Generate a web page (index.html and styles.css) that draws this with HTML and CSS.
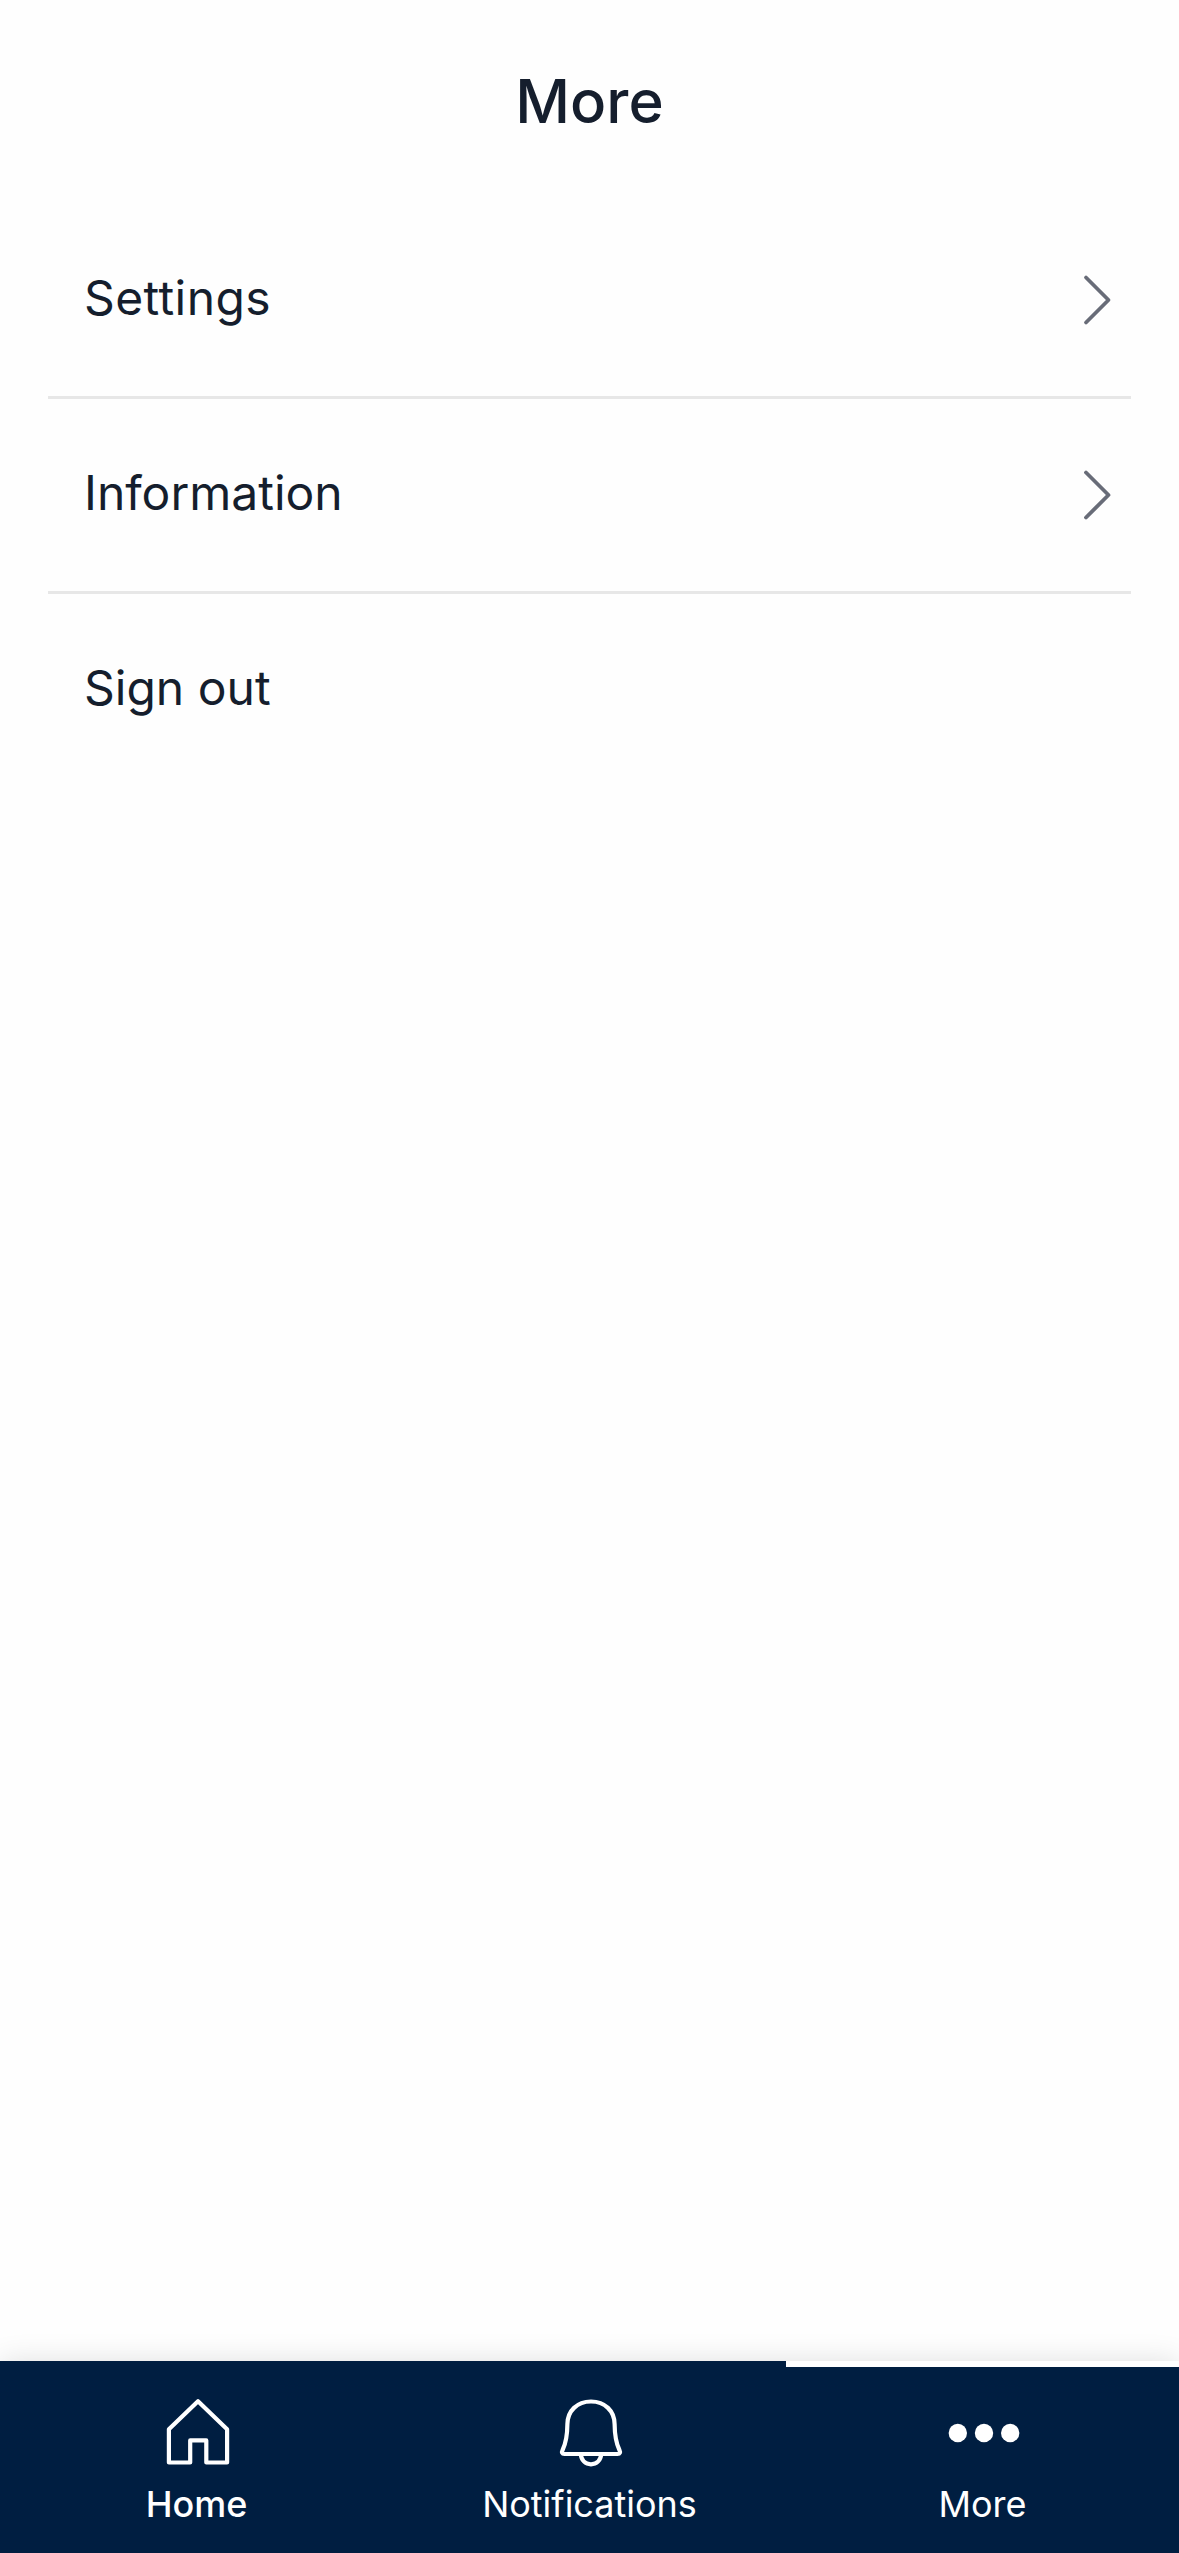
FILE: index.html
```
<!DOCTYPE html>
<html lang="en">
  <head>
    <meta charset="UTF-8" />
    <meta name="viewport" content="width=device-width, initial-scale=1.0" />
    <title>More</title>
    <link rel="stylesheet" href="styles.css">
  </head>
  <body>
    <div class="app">
      <header class="header">
        <h1 class="header__title">More</h1>
      </header>

      <main class="content">
        <ul class="menu">
          <li class="menu__item">
            <span class="menu__label menu__label--wide">Settings</span>
            <svg class="menu__chevron" viewBox="0 0 30 54">
              <path d="M3 4.5 25.5 27 3 49.5" />
            </svg>
          </li>
          <li class="menu__item">
            <span class="menu__label">Information</span>
            <svg class="menu__chevron" viewBox="0 0 30 54">
              <path d="M3 4.5 25.5 27 3 49.5" />
            </svg>
          </li>
          <li class="menu__item">
            <span class="menu__label">Sign out</span>
          </li>
        </ul>
      </main>

      <nav class="tabs">
        <a class="tabs__item tabs__item--strong">
          <svg class="tabs__icon" viewBox="0 0 72 72">
            <path d="M36 4.2 6.9 32.3V65.5H28.2V43.4H44.3V65.5H65.1V32.3Z" />
          </svg>
          <span class="tabs__label">Home</span>
        </a>
        <a class="tabs__item">
          <svg class="tabs__icon" viewBox="0 0 72 72">
            <path d="M36 4.5C22 4.5 12.6 14 12.4 27C12.3 39 11 46 7.6 53C6.4 55.5 7 57 9.5 57H62.5C65 57 65.6 55.5 64.4 53C61 46 59.7 39 59.6 27C59.4 14 50 4.5 36 4.5Z" />
            <path d="M25.8 57C26.3 63.5 30.5 67.3 36 67.3S45.7 63.5 46.2 57" />
          </svg>
          <span class="tabs__label">Notifications</span>
        </a>
        <a class="tabs__item tabs__item--active">
          <svg class="tabs__icon tabs__icon--dots" viewBox="0 0 72 72">
            <circle cx="9.8" cy="36" r="9.2" />
            <circle cx="36" cy="36" r="9.2" />
            <circle cx="62.2" cy="36" r="9.2" />
          </svg>
          <span class="tabs__label">More</span>
        </a>
      </nav>
    </div>
  </body>
</html>
```
FILE: styles.css
```
* {
  box-sizing: border-box;
}

body {
  margin: 0;
  background-color: #fefefe;
  font-family: Inter, "Liberation Sans", sans-serif;
  color: #151e2d;
}

ul {
  margin: 0;
  padding: 0;
  list-style: none;
}

.app {
  display: flex;
  flex-direction: column;
  height: 100vh;
  overflow: hidden;
}

.header {
  display: flex;
  justify-content: center;
  align-items: center;
  height: 204px;
  padding-bottom: 2px;
}

.header__title {
  margin: 0;
  font-size: 60px;
  font-weight: 500;
  line-height: 72px;
}

.content {
  flex: 1;
  padding: 0 48px;
}

.menu__item {
  display: flex;
  justify-content: space-between;
  align-items: center;
  height: 195px;
  padding: 0 18px 0 36px;
  border-bottom: 3px solid #e7e7e7;
}

.menu__item:last-child {
  border-bottom-color: transparent;
}

.menu__label {
  padding-bottom: 4px;
  font-size: 48px;
  line-height: 60px;
}

.menu__label--wide {
  letter-spacing: 0.4px;
}

.menu__chevron {
  width: 30px;
  height: 54px;
  fill: none;
  stroke: #686c78;
  stroke-width: 3.8;
  stroke-linecap: round;
  stroke-linejoin: round;
}

.tabs {
  display: flex;
  height: 192px;
  background-color: #001e41;
  box-shadow: 0 0 28px rgba(0, 0, 0, 0.12);
}

.tabs__item {
  flex: 1;
  display: flex;
  flex-direction: column;
  align-items: center;
  padding-top: 30px;
  border-top: 6px solid transparent;
  color: #fff;
}

.tabs__item--active {
  border-top-color: #fff;
}

.tabs__icon {
  width: 72px;
  height: 72px;
  margin-left: 3px;
  overflow: visible;
  fill: none;
  stroke: #fff;
  stroke-width: 4.2;
  stroke-linejoin: round;
}

.tabs__icon--dots {
  fill: #fff;
  stroke: none;
}

.tabs__label {
  margin-top: 13px;
  font-size: 36px;
  line-height: 44px;
}

.tabs__item--strong .tabs__label {
  font-weight: 500;
}
```
